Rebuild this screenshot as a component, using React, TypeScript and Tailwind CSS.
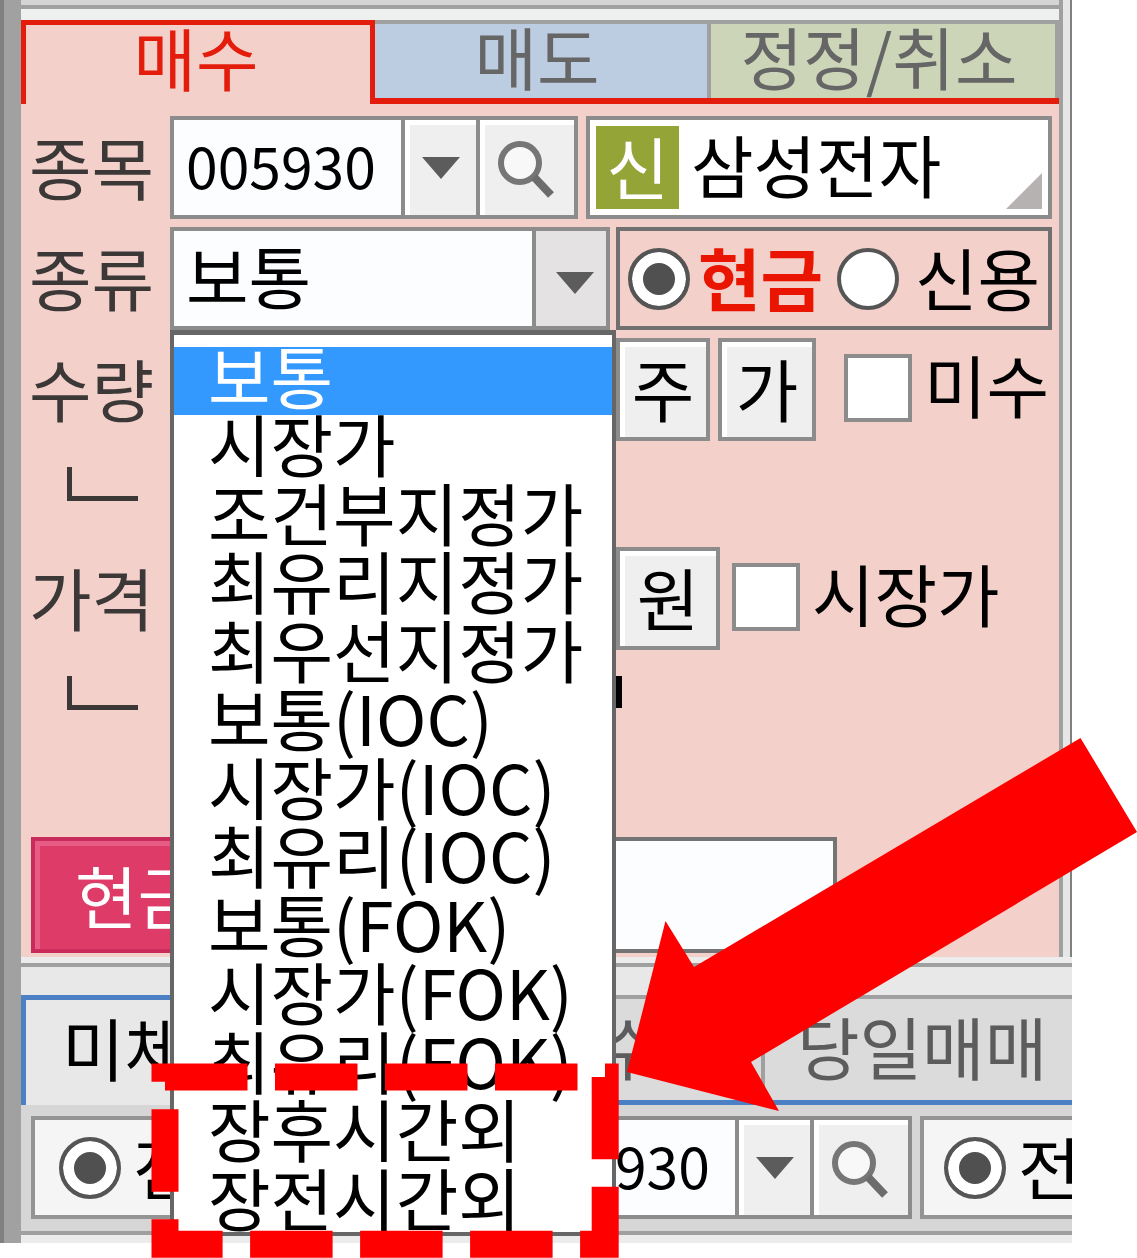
import React, { useState } from "react";
import clsx from "clsx";

const ORDER_TYPES = [
  "보통",
  "시장가",
  "조건부지정가",
  "최유리지정가",
  "최우선지정가",
  "보통(IOC)",
  "시장가(IOC)",
  "최유리(IOC)",
  "보통(FOK)",
  "시장가(FOK)",
  "최유리(FOK)",
  "장후시간외",
  "장전시간외",
];

const Caret = () => (
  <svg viewBox="0 0 38 22" className="h-[22px] w-[38px]" aria-hidden="true">
    <path d="M0 0H38L19 22Z" fill="#5c5c5c" />
  </svg>
);

const Magnifier = () => (
  <svg viewBox="0 0 60 62" className="h-[62px] w-[60px]" aria-hidden="true">
    <circle cx="23" cy="26" r="19" fill="#f8f8f8" stroke="#767676" strokeWidth="6" />
    <path d="M37 40L54 58" stroke="#6c6c6c" strokeWidth="8" />
  </svg>
);

interface FaceButtonProps {
  label?: string;
  className?: string;
  children: React.ReactNode;
}

const FaceButton: React.FC<FaceButtonProps> = ({ label, className, children }) => (
  <button
    type="button"
    aria-label={label}
    className={clsx(
      "flex shrink-0 items-center justify-center border-[#8c8c8c] bg-[#efefef] shadow-[inset_5px_5px_0_#fff]",
      className
    )}
  >
    {children}
  </button>
);

// Stock code box with history arrow and search button
const CodeField: React.FC<{ label: string }> = ({ label }) => (
  <div className="flex h-[103px] w-[408px] shrink-0 border-4 border-[#8c8c8c] bg-[#fcfdff]">
    <input
      aria-label={label}
      defaultValue="005930"
      className="h-full min-w-0 flex-1 bg-transparent pb-2 pl-3 text-[57px] outline-none"
    />
    <FaceButton label="최근 종목" className="w-[75px] border-l-4">
      <Caret />
    </FaceButton>
    <FaceButton label="종목 검색" className="w-[98px] border-l-4">
      <Magnifier />
    </FaceButton>
  </div>
);

interface RadioProps {
  name: string;
  label: string;
  checked?: boolean;
  className?: string;
}

const Radio: React.FC<RadioProps> = ({ name, label, checked, className }) => (
  <label className={clsx("flex shrink-0 items-center", className)}>
    <input
      type="radio"
      name={name}
      defaultChecked={checked}
      className="size-[62px] shrink-0 appearance-none rounded-full border-4 border-[#555] bg-white checked:bg-[#505050] checked:shadow-[inset_0_0_0_11px_#fff]"
    />
    <span className="pb-1">{label}</span>
  </label>
);

const Check: React.FC<{ label: string; className?: string }> = ({ label, className }) => (
  <label className={clsx("flex shrink-0 items-center gap-3 pb-1", className)}>
    <input
      type="checkbox"
      className="size-[68px] shrink-0 appearance-none border-4 border-[#8c8c8c] bg-white checked:bg-[#505050]"
    />
    <span className="pb-2">{label}</span>
  </label>
);

const RowLabel: React.FC<{ htmlFor: string; children: React.ReactNode }> = ({ htmlFor, children }) => (
  <label htmlFor={htmlFor} className="w-[149px] shrink-0 pb-1 pl-2 text-[#3c3838]">
    {children}
  </label>
);

const Branch = () => (
  <div className="ml-[46px] h-[34px] w-[71px] border-b-[5px] border-l-[5px] border-[#3c3838]" />
);

const App: React.FC = () => {
  const [orderType, setOrderType] = useState("보통");

  return (
    <div className="relative min-h-[1258px] overflow-hidden bg-white font-['Noto_Sans_CJK_KR',sans-serif] text-[68px] leading-[64px] text-black">
      <div className="mr-[65px] flex">
        {/* Window edge */}
        <div className="w-[21px] shrink-0 border-l-4 border-[#808080] bg-[#a1a1a1]" />

        <div className="min-w-0 flex-1 bg-[#ececec]">
          {/* Order panel */}
          <div className="flex">
            <div className="min-w-0 flex-1 bg-[#f4d0ca]">
              <div className="h-[9px] border-b-4 border-[#a0a0a0] bg-[#d4d4d4]" />
              <div className="h-[11px] bg-[#eeefef]" />

              <div className="flex h-[84px] whitespace-nowrap">
                <button type="button" className="flex w-[354px] shrink-0 justify-center border-x-[5px] border-t-[5px] border-[#e41c0c] pb-4 pr-1 text-[#e41c0c]">
                  매수
                </button>
                <div className="flex min-w-0 flex-1 border-b-[6px] border-[#e41c0c] text-[#666]">
                  <button type="button" className="flex w-[332px] shrink-0 justify-center border-t-4 border-[#a0a0a0] bg-[#bccce1] pb-2 pr-2">
                    매도
                  </button>
                  <button type="button" className="flex flex-1 justify-center border-x-4 border-t-4 border-[#a0a0a0] bg-[#cdd5b9] pb-2 pr-2">
                    정정/취소
                  </button>
                </div>
              </div>

              <div className="flex flex-col gap-2 pb-1 pr-[7px] pt-3">
                <div className="flex items-center">
                  <RowLabel htmlFor="stock-name">종목</RowLabel>
                  <CodeField label="종목 코드" />
                  <div className="relative ml-2 flex h-[103px] min-w-0 flex-1 items-center border-4 border-[#8c8c8c] bg-white pl-[6px]">
                    <span className="flex size-[83px] shrink-0 items-center justify-center bg-[#94a436] pb-1 text-white">신</span>
                    <input id="stock-name" defaultValue="삼성전자" className="ml-3 h-full w-full min-w-0 bg-transparent pb-2 outline-none" />
                    <svg viewBox="0 0 36 36" className="absolute bottom-[6px] right-[6px] size-9" aria-hidden="true">
                      <path d="M36 0V36H0Z" fill="#b6b2b2" />
                    </svg>
                  </div>
                </div>

                <div className="flex items-center">
                  <RowLabel htmlFor="order-type">종류</RowLabel>
                  <div className="relative w-[440px] shrink-0">
                    <div className="flex h-[103px] border-4 border-[#8c8c8c] bg-[#fcfdff]">
                      <select
                        id="order-type"
                        value={orderType}
                        onChange={(e) => setOrderType(e.target.value)}
                        className="h-full min-w-0 flex-1 appearance-none bg-transparent pb-2 pl-3 leading-[80px] outline-none"
                      >
                        {ORDER_TYPES.map((type) => (
                          <option key={type}>{type}</option>
                        ))}
                      </select>
                      <div className="flex w-[74px] items-center justify-center border-l-4 border-[#8c8c8c] bg-[#e4e2e2] pl-2 pt-2">
                        <Caret />
                      </div>
                    </div>

                    {/* Open list */}
                    <div className="absolute left-0 top-full z-10 h-[906px] w-[446px] overflow-hidden border-4 border-t-[5px] border-[#666] bg-white pt-3">
                      <ul role="listbox" aria-label="종류" className="flex h-[890px] flex-col leading-[56px]">
                        {ORDER_TYPES.map((type) => (
                          <li
                            key={type}
                            role="option"
                            aria-selected={type === orderType}
                            onClick={() => setOrderType(type)}
                            className={clsx(
                              "flex-1 whitespace-nowrap pl-[34px]",
                              type === orderType && "bg-[#3399ff] text-white"
                            )}
                          >
                            {type}
                          </li>
                        ))}
                      </ul>
                    </div>
                  </div>
                  <div className="ml-[6px] flex h-[103px] min-w-0 flex-1 items-center justify-between overflow-hidden border-4 border-[#707070] px-2">
                    <Radio name="funding" label="현금" checked className="gap-2 font-bold text-[#ea1500]" />
                    <Radio name="funding" label="신용" className="gap-4" />
                  </div>
                </div>

                <div className="flex items-center">
                  <RowLabel htmlFor="quantity">수량</RowLabel>
                  <input id="quantity" className="h-[103px] w-[440px] shrink-0 border-4 border-[#8c8c8c] bg-white" />
                  <FaceButton className="ml-[6px] h-[103px] w-[94px] border-4 pb-1">주</FaceButton>
                  <FaceButton className="ml-2 h-[103px] w-[98px] border-4 pb-1">가</FaceButton>
                  <Check label="미수" className="ml-7" />
                </div>

                <div className="h-[90px] pt-[18px]">
                  <Branch />
                </div>

                <div className="flex items-center">
                  <RowLabel htmlFor="price">가격</RowLabel>
                  <input id="price" className="h-[103px] w-[440px] shrink-0 border-4 border-[#8c8c8c] bg-white" />
                  <FaceButton className="ml-[6px] h-[103px] w-[104px] border-4 pb-1">원</FaceButton>
                  <Check label="시장가" className="ml-3" />
                </div>

                <div className="flex h-[171px] pt-[18px]">
                  <Branch />
                  <div className="ml-[478px] h-8 w-[6px] bg-black" />
                </div>

                <div className="flex items-center gap-2 pl-[10px]">
                  <button type="button" className="h-[116px] w-[570px] shrink-0 border-4 border-[#c92c5a] bg-[#de3b69] pl-10 text-left text-white shadow-[inset_5px_5px_0_#e65c84]">
                    현금매수
                  </button>
                  <input aria-label="주문 금액" className="h-[116px] w-[228px] border-4 border-[#747474] bg-[#fcfdff]" />
                </div>
              </div>
            </div>
            <div className="w-[13px] shrink-0 border-l-4 border-r-2 border-l-[#a0a0a0] border-r-[#808080] bg-[#e6e6e6]" />
          </div>

          <div className="h-[10px] border-b-4 border-[#a0a0a0]" />
          <div className="h-7 bg-[#e8e8e8]" />

          {/* Account tabs */}
          <div className="flex h-[110px] whitespace-nowrap">
            <button type="button" className="w-[244px] shrink-0 border-l-[5px] border-t-[5px] border-[#4c80c4] bg-[#e8e8e8] pb-3 pl-9 text-left">
              미체결
            </button>
            <div className="flex min-w-0 flex-1 border-b-[5px] border-[#4c80c4] bg-[#dcdbdb] text-[#5c5c5c]">
              <button type="button" className="w-[230px] shrink-0 border-r-4 border-t-4 border-[#a0a0a0] pb-2">잔고</button>
              <button type="button" className="w-[270px] shrink-0 border-r-4 border-t-4 border-[#a0a0a0] pb-2">예수금</button>
              <button type="button" className="min-w-0 flex-1 overflow-hidden border-t-4 border-[#a0a0a0] pb-2 pl-8 text-left">당일매매</button>
            </div>
          </div>

          {/* Filter bar */}
          <div className="flex gap-2 overflow-hidden whitespace-nowrap border-b-4 border-[#a0a0a0] bg-[#d6d6d6] pb-3 pl-[10px] pt-[11px]">
            <div className="flex h-[103px] w-[465px] shrink-0 items-center gap-5 overflow-hidden border-4 border-[#949494] bg-[#f5f5f5] pl-6">
              <Radio name="scope" label="전체" checked className="gap-3" />
              <Radio name="scope" label="종목" className="gap-3" />
            </div>
            <CodeField label="조회 종목 코드" />
            <div className="flex h-[103px] min-w-0 flex-1 items-center overflow-hidden border-y-4 border-l-4 border-[#949494] bg-[#f5f5f5] pl-5">
              <Radio name="side" label="전체" checked className="gap-3" />
            </div>
          </div>
          <div className="h-2" />
        </div>
      </div>

      {/* Dashed callout round the after-hours types, with its arrow */}
      <svg viewBox="0 0 1137 1258" className="pointer-events-none absolute left-0 top-0 z-20 h-[1258px] w-[1137px]" aria-hidden="true">
        <path
          d="M165 1077H605.2V1244.2H165Z"
          fill="none"
          stroke="#f00"
          strokeWidth="27"
          strokeDasharray="82.5 27.5"
        />
        <path d="M627 1072L665.5 921L694 967L1080.500 738L1137 832L751 1062L779 1111Z" fill="#f00" />
      </svg>
    </div>
  );
};

export default App;
